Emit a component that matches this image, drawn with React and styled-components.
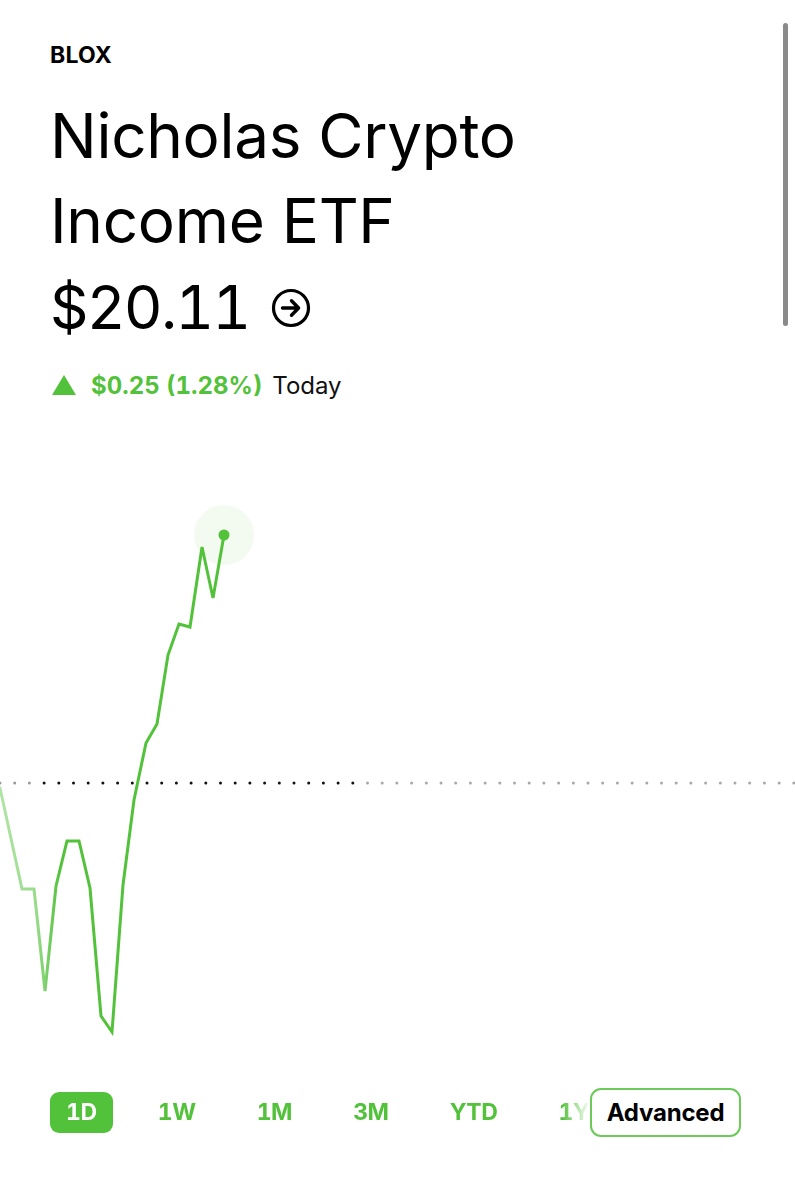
import React from "react";
import styled, { createGlobalStyle } from "styled-components";

const GREEN = "#53c23b";

const Global = createGlobalStyle`
  html, body { margin: 0; padding: 0; background: #fff; }
  body { font-family: Inter, "Liberation Sans", Arial, sans-serif; color: #000; }
  * { box-sizing: border-box; }
`;

const Page = styled.div`
  width: 795px;
  height: 1200px;
  position: relative;
  overflow: hidden;
  background: #fff;
  display: flex;
  flex-direction: column;
`;

const Header = styled.div`
  padding: 41px 50px 0 50px;
  display: flex;
  flex-direction: column;
`;

const Ticker = styled.div`
  font-size: 23px;
  font-weight: 700;
  letter-spacing: 0.2px;
  line-height: 28px;
`;

const Title = styled.h1`
  margin: 24px 0 0 0;
  font-size: 62px;
  font-weight: 400;
  line-height: 85px;
  letter-spacing: -0.3px;
`;

const PriceRow = styled.div`
  display: flex;
  align-items: center;
  gap: 22px;
  margin-top: 2px;
  height: 84px;
`;

const Price = styled.div`
  font-size: 60px;
  font-weight: 400;
  font-variant-numeric: tabular-nums;
  letter-spacing: -1.8px;
  line-height: 84px;
`;

const ArrowIcon = styled.svg`
  width: 40px;
  height: 40px;
  margin-top: 2px;
`;

const ChangeRow = styled.div`
  display: flex;
  align-items: center;
  margin-top: 22px;
  font-size: 24px;
  line-height: 30px;
`;

const Triangle = styled.span`
  width: 0;
  height: 0;
  border-left: 12px solid transparent;
  border-right: 12px solid transparent;
  border-bottom: 20px solid ${GREEN};
  margin: 0 15px 3px 2px;
`;

const Change = styled.span`
  color: ${GREEN};
  font-weight: 700;
  font-variant-numeric: tabular-nums;
  margin-right: 10px;
`;

const Period = styled.span`
  color: #111;
`;

const ChartSvg = styled.svg`
  display: block;
  margin-top: 57px;
  width: 795px;
  height: 620px;
`;

const TabBar = styled.div`
  display: flex;
  align-items: center;
  padding: 8px 0 0 50px;
  height: 60px;
`;

const TabScroller = styled.div`
  display: flex;
  align-items: center;
  gap: 29px;
  width: 538px;
  overflow: hidden;
  -webkit-mask-image: linear-gradient(to right, #000 0, #000 512px, transparent 540px);
  mask-image: linear-gradient(to right, #000 0, #000 512px, transparent 540px);
`;

const Tab = styled.div`
  flex: none;
  height: 41px;
  padding: 0 16px;
  border-radius: 9px;
  display: flex;
  align-items: center;
  font-size: 23px;
  font-weight: 700;
  letter-spacing: -0.4px;
  font-variant-numeric: tabular-nums;
  color: ${(p) => (p.$active ? "#fff" : GREEN)};
  background: ${(p) => (p.$active ? GREEN : "transparent")};
`;

const AdvancedButton = styled.button`
  flex: none;
  margin-left: 2px;
  height: 49px;
  width: 151px;
  border: 2px solid #6cc95a;
  border-radius: 11px;
  background: #fff;
  font-family: inherit;
  font-size: 24px;
  font-weight: 700;
  letter-spacing: -0.2px;
  color: #000;
  padding: 0;
`;

const ScrollIndicator = styled.div`
  position: absolute;
  left: 783px;
  top: 23px;
  width: 5px;
  height: 303px;
  border-radius: 3px;
  background: #8a8a8a;
`;

const CHART_TOP = 460;
const raw = [
  [0, 790], [22, 891], [34, 891], [45, 993], [56, 888], [67, 843], [79, 843],
  [90, 890], [101, 1018], [112, 1034], [123, 887], [134, 802], [146, 745],
  [157, 726], [168, 657], [179, 626], [190, 629], [202, 549], [213, 600], [224, 537],
];
const pts = raw.map(([x, y]) => `${x},${y - CHART_TOP}`).join(" ");

const dots = Array.from({ length: 55 }, (_, i) => i * 14.7);

function Chart() {
  const baseY = 785 - CHART_TOP;
  return (
    <ChartSvg viewBox="0 0 795 620">
      <defs>
        <linearGradient id="fade" x1="0" y1="0" x2="60" y2="0" gradientUnits="userSpaceOnUse">
          <stop offset="0" stopColor={GREEN} stopOpacity="0.45" />
          <stop offset="0.6" stopColor={GREEN} stopOpacity="0.6" />
          <stop offset="1" stopColor={GREEN} stopOpacity="1" />
        </linearGradient>
      </defs>
      {dots.map((x, i) => {
        const fade = x < 40 ? "#9a9a9a" : x > 360 ? "#a8a8a8" : "#111";
        return <circle key={i} cx={x} cy={baseY} r="1.5" fill={fade} />;
      })}
      <polyline
        points={pts}
        fill="none"
        stroke="url(#fade)"
        strokeWidth="3"
        strokeLinejoin="miter"
        strokeLinecap="round"
      />
      <circle cx="224" cy={537 - CHART_TOP} r="30" fill={GREEN} fillOpacity="0.07" />
      <circle cx="224" cy={537 - CHART_TOP} r="5.5" fill={GREEN} />
    </ChartSvg>
  );
}

export default function App() {
  return (
    <Page>
      <Global />
      <Header>
        <Ticker>BLOX</Ticker>
        <Title>
          Nicholas Crypto
          <br />
          Income ETF
        </Title>
        <PriceRow>
          <Price>$20.11</Price>
          <ArrowIcon viewBox="0 0 40 40">
            <circle cx="20" cy="20" r="17.5" fill="none" stroke="#000" strokeWidth="3.2" />
            <path d="M11.5 20 H27.5 M20.5 12.8 L27.6 20 L20.5 27.2" fill="none" stroke="#000" strokeWidth="3.4" strokeLinecap="round" strokeLinejoin="round" />
          </ArrowIcon>
        </PriceRow>
        <ChangeRow>
          <Triangle />
          <Change>$0.25 (1.28%)</Change>
          <Period>Today</Period>
        </ChangeRow>
      </Header>
      <Chart />
      <TabBar>
        <TabScroller>
          <Tab $active>1D</Tab>
          <Tab>1W</Tab>
          <Tab>1M</Tab>
          <Tab>3M</Tab>
          <Tab>YTD</Tab>
          <Tab>1Y</Tab>
        </TabScroller>
        <AdvancedButton>Advanced</AdvancedButton>
      </TabBar>
      <ScrollIndicator />
    </Page>
  );
}
